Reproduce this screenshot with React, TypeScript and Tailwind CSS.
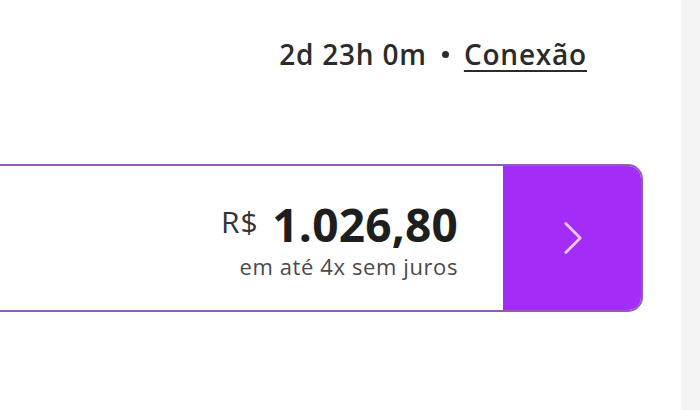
import { ChevronRight } from "lucide-react";

const font = { fontFamily: '"Open Sans", "Noto Sans", sans-serif' };

export default function App() {
  return (
    <div className="flex h-[410px] w-[700px] bg-white text-[#222]" style={font}>
      <main className="flex flex-1 flex-col">
        {/* deadline + connection info */}
        <div className="flex items-center justify-end gap-[15px] pr-[94px] pt-[35px] text-[28px] font-semibold leading-[38px] tracking-[0.8px] text-[#2b2b2b]">
          <span>2d 23h 0m</span>
          <span className="h-[7px] w-[7px] rounded-full bg-[#2b2b2b]" />
          <span className="underline decoration-2 underline-offset-[5px]">Conexão</span>
        </div>

        {/* price card */}
        <div className="mr-[38px] -ml-[20px] mt-[91px] flex h-[148px] overflow-hidden rounded-r-[15px] border-2 border-[#8e5bb6]">
          <div className="flex flex-1 flex-col items-end justify-center gap-[4px] pr-[45px] pt-[6px]">
            <div className="flex h-[46px] items-center gap-[14px]">
              <span className="-mt-[6px] text-[30px] tracking-[0.8px] text-[#333]">R$</span>
              <span className="text-[46px] font-bold leading-[46px] tracking-[0.2px] text-[#1e1e1e]">1.026,80</span>
            </div>
            <span className="text-[22px] leading-[30px] tracking-[0.6px] text-[#4a4a4a]">em até 4x sem juros</span>
          </div>
          <button type="button" className="-my-[2px] -mr-[2px] flex w-[140px] items-center justify-center bg-[#a42cf7]">
            <ChevronRight size={58} strokeWidth={1.1} className="text-[#f4c8ff]" />
          </button>
        </div>
      </main>
      <aside className="w-[19px] bg-[#f4f4f4]" />
    </div>
  );
}
